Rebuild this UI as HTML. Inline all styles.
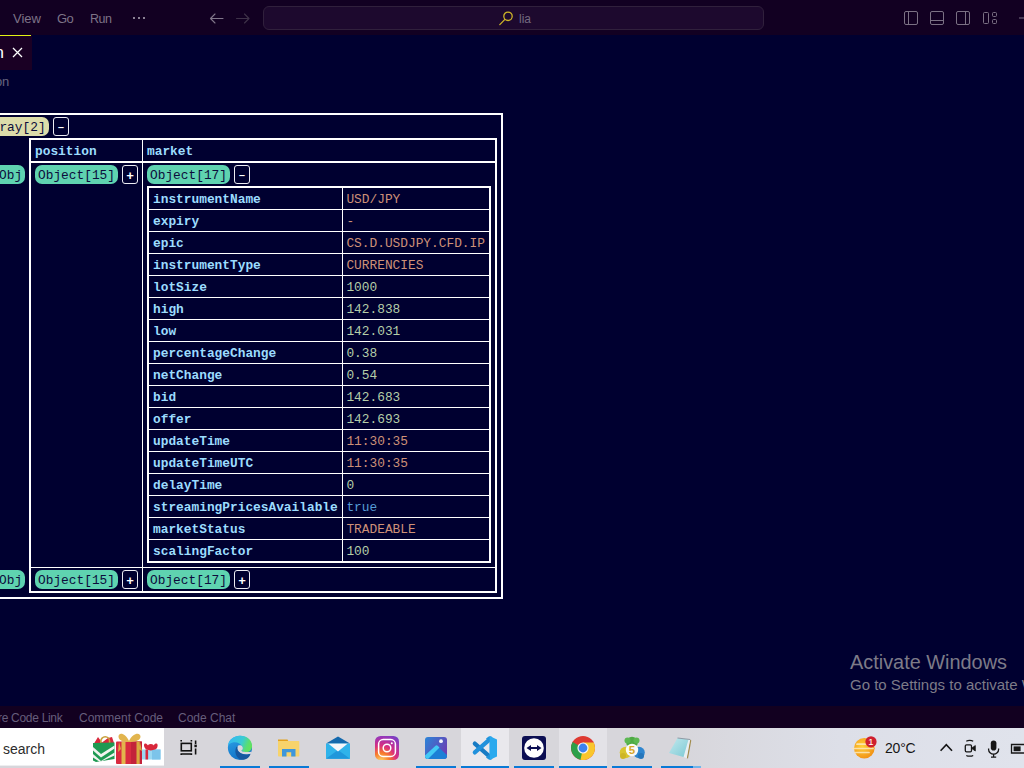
<!DOCTYPE html>
<html lang="en">
<head>
<meta charset="utf-8">
<title>JSON Grid</title>
<style>
*{box-sizing:border-box;margin:0;padding:0}
html,body{width:1024px;height:768px;overflow:hidden;background:#000030}
body{position:relative;font-family:"Liberation Sans",sans-serif;font-size:13px;color:#8d8496}
.abs{position:absolute}
/* title bar */
#titlebar{position:absolute;left:0;top:0;width:1024px;height:35px;background:#120022}
#titlebar .m{position:absolute;top:11px;line-height:16px;font-size:13px;color:#7d7387;white-space:nowrap}
#search{position:absolute;left:263px;top:6px;width:501px;height:24px;border:1px solid #30203c;border-radius:6px;background:#1d092e}
#search span{position:absolute;left:255px;top:4px;line-height:16px;font-size:12px;color:#736a80}
/* tab */
#tab{position:absolute;left:0;top:35px;width:32px;height:35px;background:#1a0024}
#tab:before{content:"";position:absolute;left:0;top:0;width:31px;height:1px;background:#e2f314}
#tab .tn{position:absolute;left:-5.5px;top:10px;font-size:17px;line-height:16px;color:#fff}
#crumb{position:absolute;left:-8px;top:74px;line-height:16px;font-size:13px;color:#67647f}
/* status bar */
#status{position:absolute;left:0;top:706px;width:1024px;height:22px;background:#120020}
#status span{position:absolute;top:5px;line-height:14px;font-size:12px;color:#665e7c;white-space:nowrap}
/* taskbar */
#taskbar{position:absolute;left:0;top:728px;width:1024px;height:40px;background:linear-gradient(90deg,#d7d6db 0,#d7d6db 66%,#dddfe8 82%,#e0e3ec 100%)}
#taskbar .hl{position:absolute;top:0;height:38px}
#taskbar .ul{position:absolute;top:38px;height:2px;background:#0a7ad6}
#taskbar .temp{position:absolute;left:885px;top:10px;font-size:14px;line-height:20px;color:#161616;letter-spacing:-0.2px}
#tsearch{position:absolute;left:0;top:0;width:164px;height:38px;background:#fff;border-bottom:1px solid #eeeef0}
#tsearch span{position:absolute;left:3px;top:11px;font-size:14px;line-height:20px;color:#2c2c2c}
/* grid */
#grid{position:absolute;left:-60px;top:113px;width:563px;height:486px;border:2px solid #fff}
.mono,#mid,.pill,.btn{font-family:"Liberation Mono",monospace;font-size:12.83px}
.pill{position:absolute;height:19px;border-radius:7px;line-height:19px;padding:1px 3px 0 3px;color:#0c0c3c;white-space:pre;font-weight:normal}
.obj{background:#5fd3b0}
.arr{background:#dcdcaa}
.btn{position:absolute;width:16px;height:19px;border:1px solid #ececf3;border-radius:3px;color:#fff;font-weight:bold;text-align:center;line-height:17px;padding-top:2px}
.btn.mi{font-weight:normal;padding-top:1px}
.btn.mi i{display:inline-block;font-style:normal;transform:scaleX(1.55)}
table{border-collapse:separate;border-spacing:0;border:2px solid #fff}
td,th{text-align:left;vertical-align:top;white-space:nowrap;padding:0}
.k{color:#9cdcfe;font-weight:bold}
.s{color:#ce9178}
.n{color:#b5cea8}
.b{color:#569cd6}
#mid{position:absolute;left:29px;top:138px;width:468px;table-layout:fixed}
#mid>tbody>tr>th{height:23px;border-bottom:2px solid #fff;padding:4px 4px 0 4px;line-height:16px}
#mid>tbody>tr>.c1{width:112px;border-right:1px solid #fff;position:relative}
#mid>tbody>tr>.c2{width:352px;position:relative}
#mid>tbody>tr.r1>td{height:405px;border-bottom:1px solid #fff}
#mid>tbody>tr.r2>td{height:23px}
#inner{position:absolute;left:4px;top:23px;width:344px;table-layout:fixed}
#inner td{height:22px;padding:4px 4px 0 4px;line-height:16px;border-bottom:1px solid #fff}
#inner td.k{width:194px;border-right:1px solid #fff}
#inner td.s,#inner td.n,#inner td.b{padding-left:3.4px}
#inner tr:last-child td{height:21px;border-bottom:0}
#watermark{position:absolute;left:850px;top:648px;color:#7d7b88;white-space:nowrap}
</style>
</head>
<body>
<div id="titlebar">
  <span class="m" style="left:13px">View</span>
  <span class="m" style="left:57px;letter-spacing:-0.5px">Go</span>
  <span class="m" style="left:90px;font-size:12.5px;letter-spacing:-0.5px">Run</span>
  <svg class="abs" style="left:132px;top:16px" width="14" height="4" viewBox="0 0 14 4" fill="#8a8193"><rect x="1" y="1" width="2" height="2"/><rect x="6" y="1" width="2" height="2"/><rect x="11" y="1" width="2" height="2"/></svg>
  <svg class="abs" style="left:208px;top:11px" width="44" height="16" viewBox="0 0 44 16" fill="none" stroke-width="1.1" stroke-linecap="round" stroke-linejoin="round">
    <path d="M15 7.5H2.5M7 3L2.5 7.5L7 12" stroke="#80768a"/>
    <path d="M28.5 7.5H41M36.5 3L41 7.5L36.5 12" stroke="#3e3249"/>
  </svg>
  <div id="search">
    <svg class="abs" style="left:234px;top:1.5px" width="18" height="18" viewBox="0 0 18 18" fill="none" stroke="#cdb428" stroke-width="1.3" stroke-linecap="round"><circle cx="10" cy="7.3" r="4.2"/><path d="M6.9 10.4L1.8 15.6"/></svg>
    <span>lia</span>
  </div>
  <svg class="abs" style="left:903px;top:10px" width="121" height="16" viewBox="0 0 121 16" fill="none" stroke="#7b7184" stroke-width="1">
    <rect x="1.5" y="1.5" width="13" height="13" rx="1.5"/><path d="M5.5 1.5V14.5"/>
    <rect x="27.5" y="1.5" width="13" height="13" rx="1.5"/><path d="M27.5 10.5H40.5"/>
    <rect x="53.5" y="1.5" width="13" height="13" rx="1.5"/><path d="M62.5 1.5V14.5"/>
    <rect x="80.5" y="2.5" width="5" height="11" rx="1"/><rect x="89.5" y="2.5" width="4" height="4" rx="1"/><rect x="89.5" y="9.5" width="4" height="4" rx="1"/>
    <path d="M116 8H121"/>
  </svg>
</div>
<div id="tab"><span class="tn">n</span><svg class="abs" style="left:12px;top:12px" width="11" height="11" viewBox="0 0 11 11" stroke="#fff" stroke-width="1.3" fill="none"><path d="M1 1L10 10M10 1L1 10"/></svg></div>
<div id="crumb">ion</div>
<div id="grid"></div>
<span class="pill arr" style="left:-19px;top:117px">Array[2]</span><span class="btn mi" style="left:53px;top:117px"><i>-</i></span>
<span class="pill obj" style="left:-20px;top:165px;padding-left:19px">Obj</span>
<span class="pill obj" style="left:-20px;top:570px;padding-left:19px">Obj</span>
<table id="mid">
  <tr><th class="k c1">position</th><th class="k c2">market</th></tr>
  <tr class="r1"><td class="c1"><span class="pill obj" style="left:4px;top:2px">Object[15]</span><span class="btn" style="left:91px;top:2px">+</span></td>
  <td class="c2"><span class="pill obj" style="left:4px;top:2px">Object[17]</span><span class="btn mi" style="left:91px;top:2px"><i>-</i></span>
    <table id="inner">
      <tr><td class="k">instrumentName</td><td class="s">USD/JPY</td></tr>
      <tr><td class="k">expiry</td><td class="s">-</td></tr>
      <tr><td class="k">epic</td><td class="s">CS.D.USDJPY.CFD.IP</td></tr>
      <tr><td class="k">instrumentType</td><td class="s">CURRENCIES</td></tr>
      <tr><td class="k">lotSize</td><td class="n">1000</td></tr>
      <tr><td class="k">high</td><td class="n">142.838</td></tr>
      <tr><td class="k">low</td><td class="n">142.031</td></tr>
      <tr><td class="k">percentageChange</td><td class="n">0.38</td></tr>
      <tr><td class="k">netChange</td><td class="n">0.54</td></tr>
      <tr><td class="k">bid</td><td class="n">142.683</td></tr>
      <tr><td class="k">offer</td><td class="n">142.693</td></tr>
      <tr><td class="k">updateTime</td><td class="s">11:30:35</td></tr>
      <tr><td class="k">updateTimeUTC</td><td class="s">11:30:35</td></tr>
      <tr><td class="k">delayTime</td><td class="n">0</td></tr>
      <tr><td class="k">streamingPricesAvailable</td><td class="b">true</td></tr>
      <tr><td class="k">marketStatus</td><td class="s">TRADEABLE</td></tr>
      <tr><td class="k">scalingFactor</td><td class="n">100</td></tr>
    </table>
  </td></tr>
  <tr class="r2"><td class="c1"><span class="pill obj" style="left:4px;top:2px">Object[15]</span><span class="btn" style="left:91px;top:2px">+</span></td>
  <td class="c2"><span class="pill obj" style="left:4px;top:2px">Object[17]</span><span class="btn" style="left:91px;top:2px">+</span></td></tr>
</table>
<div id="status">
  <span style="left:-2px;letter-spacing:-0.3px">re Code Link</span>
  <span style="left:79px">Comment Code</span>
  <span style="left:178px">Code Chat</span>
</div>
<div id="watermark"><div style="font-size:19.9px;line-height:28px">Activate Windows</div><div style="font-size:15px;line-height:18px">Go to Settings to activate Windows.</div></div>
<div id="taskbar">
  <div id="tsearch"><span>search</span></div>
  <div class="hl" style="left:461px;width:48px;background:#e9e8ed"></div>
  <div class="hl" style="left:559px;width:48px;background:#e3e2e7"></div>
  <div class="ul" style="left:220px;width:40px"></div>
  <div class="ul" style="left:269px;width:40px"></div>
  <div class="ul" style="left:416px;width:40px"></div>
  <div class="ul" style="left:461px;width:48px"></div>
  <div class="ul" style="left:514px;width:40px"></div>
  <div class="ul" style="left:559px;width:48px"></div>
  <div class="ul" style="left:612px;width:40px"></div>
  <div class="ul" style="left:661px;width:32px"></div>
  <div class="ul" style="left:693px;width:8px;background:#72b5ea"></div>
  <span class="temp">20°C</span>
  <svg class="abs" style="left:0;top:0" width="1024" height="40" viewBox="0 0 1024 40">
    <defs>
      <linearGradient id="gEdge" x1="0.2" y1="0" x2="0.6" y2="1"><stop offset="0" stop-color="#2ea2e6"/><stop offset="0.6" stop-color="#1a82d2"/><stop offset="1" stop-color="#1270c4"/></linearGradient>
      <linearGradient id="gEdge2" x1="0" y1="0.3" x2="1" y2="0.6"><stop offset="0" stop-color="#33b8f3"/><stop offset="0.55" stop-color="#3acbd2"/><stop offset="0.82" stop-color="#5ade70"/><stop offset="1" stop-color="#62e35c"/></linearGradient>
      <radialGradient id="gInsta" cx="0.25" cy="1.05" r="1.25"><stop offset="0" stop-color="#fdd86a"/><stop offset="0.28" stop-color="#f77a2c"/><stop offset="0.52" stop-color="#d92e7f"/><stop offset="0.8" stop-color="#9b36b7"/><stop offset="1" stop-color="#6a45c8"/></radialGradient>
      <linearGradient id="gPhoto" x1="0" y1="0" x2="1" y2="0.6"><stop offset="0" stop-color="#2a86d8"/><stop offset="1" stop-color="#6a3fb4"/></linearGradient>
      <linearGradient id="gNote" x1="0" y1="0" x2="1" y2="1"><stop offset="0" stop-color="#c3e9ee"/><stop offset="1" stop-color="#7cc9d4"/></linearGradient>
      <radialGradient id="gSun" cx="0.4" cy="0.4" r="0.7"><stop offset="0" stop-color="#ffd23a"/><stop offset="1" stop-color="#f08a10"/></radialGradient>
    </defs>
    <!-- gifts -->
    <g>
      <path d="M94 15.5L98 9L102 14.5L108 10L112 9L114 15Z" fill="#d8283c"/>
      <path d="M100.8 15V13.2a4.4 4.4 0 0 1 8.8 0V15" fill="none" stroke="#c9a13c" stroke-width="1.6"/>
      <path d="M93 15L114.5 14.5V31L96 34L93 32.5Z" fill="#1e9a52"/>
      <path d="M93 19L101 26L114.5 17.5V20.5L101 29.5L93 22.5ZM93 26L101 33L114.5 24.5V27.5L100 34L93 29.5Z" fill="#f2f4f0"/>
      <rect x="116" y="13.5" width="26" height="22.5" rx="1" fill="#d92b40"/>
      <rect x="131" y="13.5" width="11" height="22.5" fill="#c3223a"/>
      <rect x="121.5" y="13.5" width="4" height="22.5" fill="#e3b44c"/>
      <rect x="136.5" y="13.5" width="3.2" height="22.5" fill="#d9a83f"/>
      <path d="M129 13C125 4 118 4 118.5 9C119 13 124 14 129 14C134 14 140 13 140.5 9C141 4 133 4 129 13Z" fill="#e2b54e"/>
      <path d="M119 14L118 24L121 21ZM140 14L142 23L138.5 21Z" fill="#d9a83f"/>
      <rect x="142" y="21.5" width="18.5" height="10" fill="#9ad8f2"/>
      <rect x="152" y="21.5" width="8.5" height="10" fill="#7cc4ea"/>
      <rect x="145.5" y="21.5" width="2.6" height="10" fill="#d8283c"/>
      <path d="M150.8 21.8C146 12 142.5 15.5 144.6 19.6C146 22.3 149 22 150.8 21.8C152.6 22 156 22.3 157.2 19.6C159 15.5 155.5 12 150.8 21.8Z" fill="#d8283c"/><circle cx="150.8" cy="19.3" r="3.2" fill="#d8283c"/>
    </g>
    <!-- task view -->
    <g fill="none" stroke="#111" stroke-width="1.6">
      <rect x="181.3" y="15.4" width="10" height="7.4"/>
      <path d="M181.2 12V13.5M191.4 12V13.5M180.5 26H192.2M181.2 26V27M191.4 26V27"/>
      <path d="M195.6 12.4V16M195.6 20.5V26.5"/>
      <rect x="194.4" y="16.6" width="2.4" height="2.6" fill="#111" stroke="none"/>
    </g>
    <!-- edge -->
    <g transform="translate(222 2) scale(0.046875)">
      <circle cx="383" cy="380" r="258" fill="url(#gEdge)"/>
      <path d="M126 335C140 200 260 120 390 122C540 125 641 220 641 340C641 420 590 472 520 472C470 472 430 455 410 440C450 420 455 370 430 345C400 300 330 250 230 265C180 275 145 300 126 335Z" fill="url(#gEdge2)"/>
      <path d="M330 350C345 315 415 315 437 355C455 385 445 425 410 440C450 470 540 482 625 462L618 512C540 530 450 525 395 492C335 455 315 400 330 350Z" fill="#d9d8dd"/>
      <path d="M305 365C255 470 300 610 420 636C520 645 595 575 608 508C560 530 470 535 400 497C340 462 312 410 332 348Z" fill="#17589f"/>
    </g>
    <!-- folder -->
    <g>
      <path d="M278 11.5h9.5l1 2H278Z" fill="#e3a11d"/>
      <rect x="278" y="13" width="21.3" height="15.6" rx="0.8" fill="#f7d36b"/>
      <path d="M282 21h13.5v7.6h-4.3v-4.4h-4.7v4.4H282Z" fill="#3e97dc"/>
    </g>
    <!-- mail -->
    <g>
      <path d="M326 15.6L338 8.6L350 15.6Z" fill="#1469ad"/>
      <rect x="326" y="15.6" width="24" height="15.2" fill="#2fb3ea"/>
      <path d="M326 30.8L338 22L350 30.8Z" fill="#1f97db"/>
      <path d="M328.5 15.8H347.5L338 23.5Z" fill="#f4f6fa"/>
    </g>
    <!-- instagram -->
    <g>
      <rect x="375" y="8" width="24" height="24" rx="5.5" fill="url(#gInsta)"/>
      <rect x="378.6" y="11.6" width="16.8" height="16.8" rx="4.5" fill="none" stroke="#fff" stroke-width="1.5"/>
      <circle cx="387" cy="20" r="3.8" fill="none" stroke="#fff" stroke-width="1.5"/>
      <circle cx="391.8" cy="15.2" r="1" fill="#fff"/>
    </g>
    <!-- photos -->
    <g>
      <rect x="425" y="9" width="22" height="22" rx="3" fill="url(#gPhoto)"/>
      <path d="M425 28L436.5 17.5L447 27V28a3 3 0 0 1 -3 3H428a3 3 0 0 1 -3 -3Z" fill="#1c7fd6"/>
      <path d="M425 27.5L435.5 17.8a1.6 1.6 0 0 1 2.2 0L439.5 19.5L428 31a3 3 0 0 1 -3 -3Z" fill="#42c9f5"/>
      <circle cx="441" cy="13.2" r="1.9" fill="#f2f4fb"/>
    </g>
    <!-- vscode -->
    <g>
      <path d="M490.6 29.4L474.8 15.6" stroke="#187bc4" stroke-width="4.2" stroke-linecap="round" fill="none"/>
      <path d="M490.6 10.6L474.8 24.4" stroke="#2191dc" stroke-width="4.2" stroke-linecap="round" fill="none"/>
      <path d="M489.4 8L497 11.4V28.6L489.4 32Z" fill="#2aa9ee"/>
      <path d="M489.4 8V32L486 29.5L489.4 26V14L486 10.5Z" fill="#1f93dc"/>
    </g>
    <!-- teamviewer -->
    <g>
      <rect x="522" y="8" width="24" height="24" rx="3" fill="#0b0e52"/>
      <circle cx="534" cy="20" r="9.8" fill="#fff"/>
      <path d="M526.5 20L531 17V19H537V17L541.5 20L537 23V21H531V23Z" fill="#0b0e52"/>
    </g>
    <!-- chrome -->
    <g>
      <circle cx="583" cy="20" r="12" fill="#de3a32"/>
      <path d="M583 20L572.6 14A12 12 0 0 0 580.5 31.7L588 23Z" fill="#2d9f49"/>
      <path d="M583 20H595A12 12 0 0 1 580.5 31.7Z" fill="#f9c62c"/>
      <path d="M583 14.5H593.7A12 12 0 0 1 595 20H583Z" fill="#f9c62c"/>
      <circle cx="583" cy="20" r="5.6" fill="#f4f5f7"/>
      <circle cx="583" cy="20" r="4.4" fill="#3d82ef"/>
    </g>
    <!-- mt5 -->
    <g>
      <circle cx="632" cy="14.5" r="5.8" fill="#4faa45"/><circle cx="627.5" cy="12.5" r="3" fill="#5cb852"/><circle cx="636.5" cy="12.5" r="3" fill="#5cb852"/>
      <circle cx="625.5" cy="24.5" r="5.8" fill="#d9c52f"/><circle cx="623" cy="28" r="3" fill="#cdb526"/>
      <circle cx="639" cy="24.5" r="5.8" fill="#2f86cf"/><circle cx="641" cy="28" r="3" fill="#2676bb"/>
      <circle cx="632" cy="22" r="6.2" fill="#fbfbf7"/>
      <text x="632" y="26.2" text-anchor="middle" font-family="Liberation Sans, sans-serif" font-size="11.5" font-weight="bold" fill="#d9a72a">5</text>
    </g>
    <!-- notepad -->
    <g>
      <path d="M690 11.5L691.3 12.5L688 30.5L686.5 30Z" fill="#a08a4a"/>
      <path d="M677.5 10L690.2 11.5L686.8 30.2L683.5 29Z" fill="#e8eef2"/>
      <path d="M677.5 10L688.5 11.5L683.5 29L669 25Z" fill="url(#gNote)"/>
      <path d="M677.5 10L690.2 11.5" stroke="#8e9aa4" stroke-width="1.2"/>
    </g>
    <!-- weather -->
    <g>
      <circle cx="864.3" cy="20.3" r="10.3" fill="url(#gSun)"/>
      <path d="M857 16.2H868M852.5 20.5H873M855 24.5H869" stroke="#fbe6b8" stroke-width="1.7" stroke-linecap="round" opacity="0.9"/>
      <circle cx="871" cy="13.8" r="5.6" fill="#cf1f2e"/>
      <text x="871" y="17.3" text-anchor="middle" font-family="Liberation Sans, sans-serif" font-size="9.5" fill="#fff">1</text>
    </g>
    <!-- tray -->
    <g fill="none" stroke="#161616" stroke-width="1.5">
      <path d="M940.6 22.8L946.3 16.6L952 22.8" stroke-width="1.6"/>
      <rect x="965.3" y="16.8" width="6.2" height="7" rx="1.2" stroke-width="1.3"/>
      <path d="M971.5 20.3L975.3 17.6V23L971.5 20.3Z" fill="#161616" stroke-width="0.8"/>
      <path d="M966.3 13.2C968 12.2 971.5 12.2 973.2 13.2M966.3 27.4C968 28.4 971.5 28.4 973.2 27.4" stroke-width="1.2"/>
      <rect x="990.8" y="12.4" width="5.6" height="10.2" rx="2.8" fill="#161616" stroke="none"/>
      <path d="M988.6 20.5V21.6a5 4.6 0 0 0 10 0V20.5M993.6 26.2V29M991 29.2H996.2" stroke-width="1.3"/>
      <path d="M1011.5 16.5H1026V25H1011.5Z" stroke-width="1.3"/>
      <rect x="1013.6" y="18.4" width="7" height="4.8" fill="#161616" stroke="none"/>
    </g>
  </svg>
</div>
</body>
</html>
